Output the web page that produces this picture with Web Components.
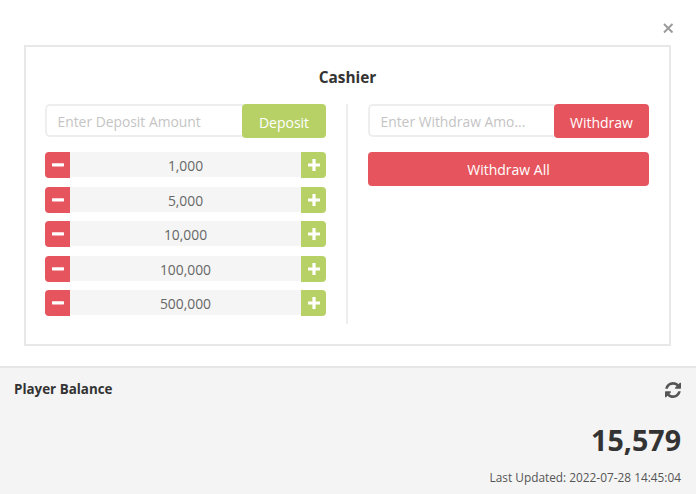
<!DOCTYPE html>
<html>
<head>
<meta charset="utf-8">
<title>Cashier</title>
<style>
  html, body { margin: 0; padding: 0; background: #fff; }
  body { width: 696px; height: 494px; overflow: hidden; font-family: "Open Sans", sans-serif; color: #333; }
</style>
</head>
<body>
<cashier-app></cashier-app>

<script>
(function () {
  const red = '#e6555d';
  const green = '#b7d167';

  class AmountForm extends HTMLElement {
    connectedCallback() {
      const color = this.getAttribute('color') === 'red' ? red : green;
      const width = this.getAttribute('button-width') || '84';
      this.attachShadow({ mode: 'open' }).innerHTML = `
        <style>
          :host { display: flex; height: 34px; box-sizing: border-box; }
          .field {
            flex: 1; min-width: 0; box-sizing: border-box; height: 33px;
            border: 2px solid #eee; border-right: 0; border-radius: 5px 0 0 5px;
            padding: 0 0 0 10.500px; font-size: 13.85px; line-height: 31px; color: #c4c4c4;
            white-space: nowrap; overflow: hidden;
          }
          button {
            width: ${width}px; height: 34px; border: 0; border-radius: 4px; margin-left: -1px;
            background: ${color}; color: #fff; font: 14px "Open Sans", sans-serif; padding: 2px 0 0;
          }
        </style>
        <div class="field"><slot name="placeholder"></slot></div>
        <button><slot></slot></button>
      `;
    }
  }

  class AmountRow extends HTMLElement {
    connectedCallback() {
      this.attachShadow({ mode: 'open' }).innerHTML = `
        <style>
          :host { display: flex; height: 26px; }
          .step {
            width: 25px; height: 26px; border: 0; padding: 0; display: flex;
            align-items: center; justify-content: center;
          }
          .minus { background: ${red}; border-radius: 4px 0 0 4px; }
          .plus { background: ${green}; border-radius: 0 4px 4px 0; }
          .value {
            flex: 1; height: 25px; background: #f5f5f5; text-align: center;
            font-size: 13.85px; line-height: 28px; color: #666;
          }
        </style>
        <button class="step minus" aria-label="Decrease">
          <svg width="12" height="12" viewBox="0 0 12 12"><rect x="0" y="4.2" width="12" height="3.2" rx=".6" fill="#fff"/></svg>
        </button>
        <div class="value"><slot></slot></div>
        <button class="step plus" aria-label="Increase">
          <svg width="12" height="12" viewBox="0 0 12 12"><path d="M4.400 0h3.200v4.400H12v3.200H7.600V12H4.400V7.600H0V4.400h4.400z" fill="#fff"/></svg>
        </button>
      `;
    }
  }

  class CashierCard extends HTMLElement {
    connectedCallback() {
      this.attachShadow({ mode: 'open' }).innerHTML = `
        <style>
          :host {
            display: block; width: 647px; height: 301px; box-sizing: border-box;
            border: 2px solid #e8e8e8; background: #fff;
          }
          h2 {
            margin: 0; height: 57px; padding-top: 20px; box-sizing: border-box; text-align: center;
            font-size: 15.4px; line-height: 21px; font-weight: 700; color: #333;
          }
          .columns { display: flex; padding: 0 20px 0 19px; }
          .col { width: 281px; height: 220px; box-sizing: border-box; }
          .left { display: flex; flex-direction: column; }
          .rows { display: flex; flex-direction: column; gap: 8.500px; margin-top: 14px; }
          .rule { width: 2px; background: #eee; margin: 0 20px 0 20px; }
          .all {
            display: block; width: 100%; height: 34px; margin-top: 14px; border: 0; border-radius: 4px;
            background: ${red}; color: #fff; font: 14px "Open Sans", sans-serif; padding: 0;
          }
        </style>
        <h2>Cashier</h2>
        <div class="columns">
          <div class="col left">
            <amount-form color="green" button-width="84"><span slot="placeholder">Enter Deposit Amount</span>Deposit</amount-form>
            <div class="rows">
              <amount-row>1,000</amount-row>
              <amount-row>5,000</amount-row>
              <amount-row>10,000</amount-row>
              <amount-row>100,000</amount-row>
              <amount-row>500,000</amount-row>
            </div>
          </div>
          <div class="rule"></div>
          <div class="col">
            <amount-form color="red" button-width="95"><span slot="placeholder">Enter Withdraw Amo...</span>Withdraw</amount-form>
            <button class="all">Withdraw All</button>
          </div>
        </div>
      `;
    }
  }

  class BalancePanel extends HTMLElement {
    connectedCallback() {
      this.attachShadow({ mode: 'open' }).innerHTML = `
        <style>
          :host {
            display: block; height: 128px; box-sizing: border-box; background: #f4f4f4;
            border-top: 2px solid #e6e6e6; padding: 11px 15px 0 14px;
          }
          .head { display: flex; justify-content: space-between; align-items: center; height: 20px; }
          .title { font-size: 13.4px; font-weight: 700; color: #333; }
          svg { display: block; margin-top: 2px; }
          .amount {
            margin-top: 22px; text-align: right; font-size: 28.600px; line-height: 38px;
            font-weight: 700; color: #333;
          }
          .updated { margin-top: 10px; text-align: right; font-size: 11.850px; line-height: 16px; color: #555; }
        </style>
        <div class="head">
          <span class="title"><slot name="title"></slot></span>
          <svg width="16" height="16" viewBox="0 0 1536 1536" fill="#555">
            <path d="M1511 928q0 5-1 7-64 268-268 434.500T764 1536q-146 0-282.500-55T238 1324l-129 129q-19 19-45 19t-45-19-19-45V960q0-26 19-45t45-19h448q26 0 45 19t19 45-19 45l-137 137q71 66 161 102t187 36q134 0 250-65t186-179q11-17 53-117 8-23 30-23h192q13 0 22.500 9.500t9.500 22.500zm25-800v448q0 26-19 45t-45 19h-448q-26 0-45-19t-19-45 19-45l138-138q-148-137-349-137-134 0-250 65T332 500q-11 17-53 117-8 23-30 23H50q-13 0-22.500-9.500T18 608v-7q65-268 270-434.500T768 0q146 0 284 55.500T1297 212l130-129q19-19 45-19t45 19 19 45z"/>
          </svg>
        </div>
        <div class="amount"><slot name="amount"></slot></div>
        <div class="updated"><slot></slot></div>
      `;
    }
  }

  class CashierApp extends HTMLElement {
    connectedCallback() {
      this.attachShadow({ mode: 'open' }).innerHTML = `
        <style>
          :host { display: block; position: relative; width: 696px; height: 494px; }
          .top { height: 366px; box-sizing: border-box; padding: 45px 25px 0 24px; }
          .close {
            position: absolute; top: 21px; right: 21px; width: 14px; height: 14px;
          }
        </style>
        <svg class="close" viewBox="0 0 14 14"><path d="M3 3l8.500 8.500M11.500 3L3 11.500" stroke="#9a9a9a" stroke-width="1.900" fill="none"/></svg>
        <div class="top"><cashier-card></cashier-card></div>
        <balance-panel>
          <span slot="title">Player Balance</span>
          <span slot="amount">15,579</span>
          Last Updated: 2022-07-28 14:45:04
        </balance-panel>
      `;
    }
  }

  customElements.define('amount-form', AmountForm);
  customElements.define('amount-row', AmountRow);
  customElements.define('cashier-card', CashierCard);
  customElements.define('balance-panel', BalancePanel);
  customElements.define('cashier-app', CashierApp);
})();
</script>
</body>
</html>
